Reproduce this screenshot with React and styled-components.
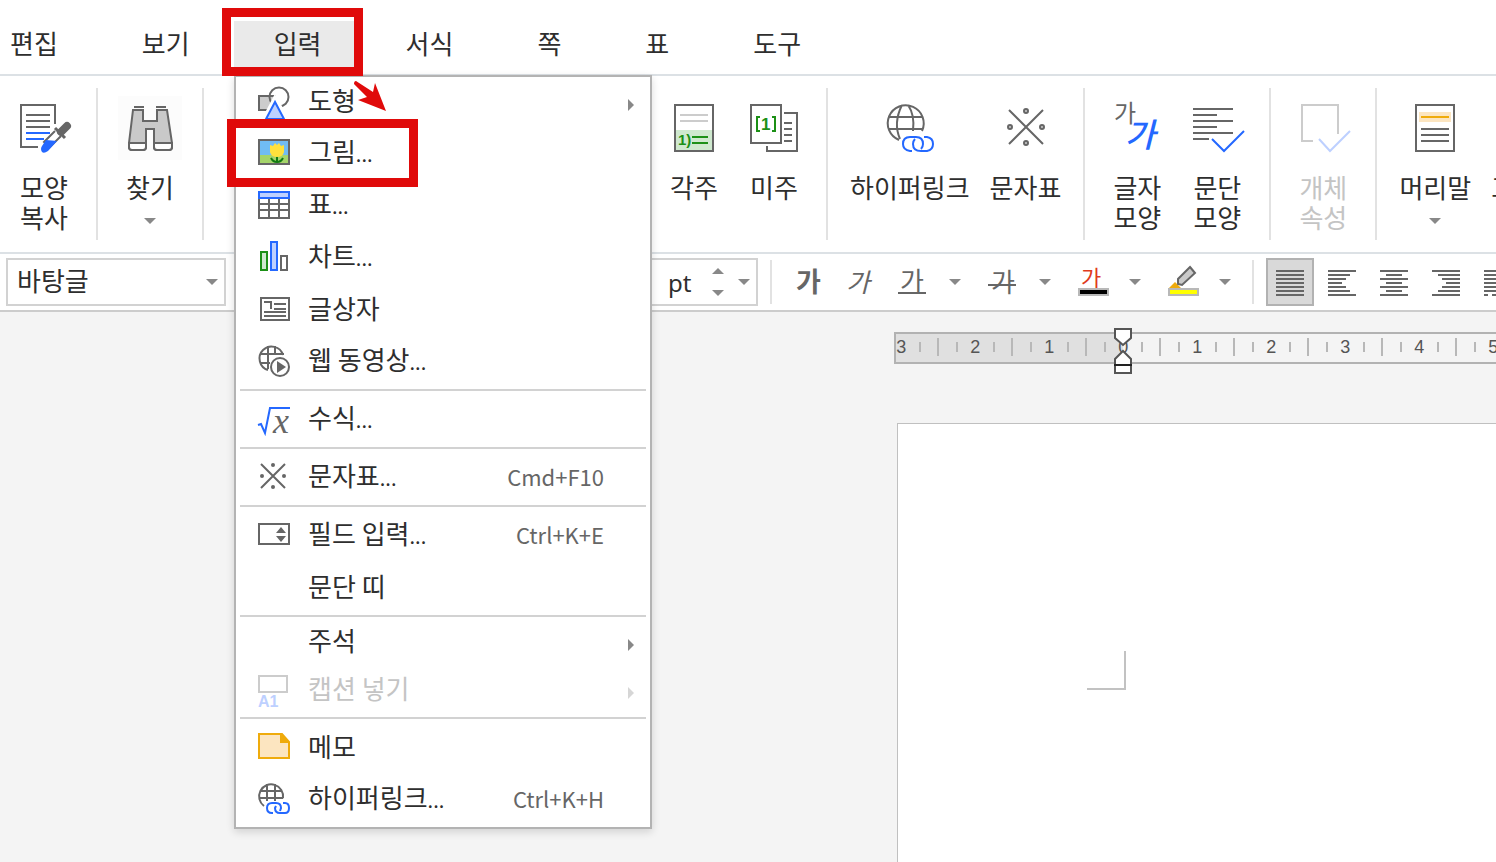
import React from 'react';
import styled, {createGlobalStyle, css} from 'styled-components';

const GlobalStyle = createGlobalStyle`
    *, *::before, *::after {
        box-sizing: border-box;
    }
    body {
        margin: 0;
        overflow: hidden;
        color: #2e2e2e;
        background: #f4f4f4;
        font-family: 'Noto Sans CJK KR', 'Noto Sans', sans-serif;
    }
    button, input, select {
        font: inherit;
        color: inherit;
    }
    svg {
        display: block;
        flex: none;
        overflow: visible;
    }
`;

const gray = '#666';
const blue = '#2468ff';
const green = '#1c9016';

const plainButton = css`
    margin: 0;
    padding: 0;
    border: 0;
    background: none;
`;

const Page = styled.div`
    position: relative;
    display: flex;
    flex-direction: column;
    height: 100vh;
    overflow: hidden;
`;

/* menu bar */

const MenuBar = styled.nav`
    display: flex;
    flex: none;
    height: 76px;
    padding-top: 20px;
    margin-left: -32px;
    background: #fff;
    border-bottom: 2px solid #dce1e5;
`;

const MenuBarItem = styled.button`
    ${plainButton}
    flex: none;
    height: 50px;
    padding: 0 40px 4px;
    font-size: 26px;
    line-height: 44px;
    border: solid #fff;
    border-width: 1px 2px;
    background: ${props => props.$open ? '#eaeaea' : 'none'};
`;

/* tool bar */

const ToolBar = styled.div`
    display: flex;
    flex: none;
    height: 178px;
    padding: 12px 0;
    background: #fff;
    border-bottom: 2px solid #dce1e5;
`;

const ToolGroup = styled.div`
    display: flex;
    flex: none;
    justify-content: flex-end;
    padding: 0 12px;
    min-width: ${props => props.$wide ? '624px' : '0'};
    border-right: 2px solid #e2e2e2;
    &:first-child {
        padding-left: 4px;
    }
    &:last-child {
        border-right: 0;
    }
`;

const ToolButton = styled.button`
    ${plainButton}
    display: flex;
    flex: none;
    flex-direction: column;
    align-items: center;
    min-width: 80px;
    padding: 8px 10px 0;
    font-size: 26px;
    line-height: 30px;
    white-space: pre-line;
    &:disabled {
        color: #c4c4c4;
    }
`;

const ToolIcon = styled.span`
    padding: 8px;
    margin: 0 -8px 12px;
    background: ${props => props.$tile ? '#fcfcfc' : 'none'};
`;

const ToolArrow = styled.span`
    display: flex;
    align-items: center;
    height: 40px;
`;

/* format bar */

const FormatBar = styled.div`
    display: flex;
    flex: none;
    align-items: center;
    gap: 4px;
    height: 58px;
    padding-left: 6px;
    background: #fff;
    border-bottom: 2px solid #ccc;
`;

const Field = styled.div`
    position: relative;
    display: flex;
    flex: none;
    align-items: center;
    width: 220px;
    height: 48px;
    font-size: 26px;
    background: #fff;
    border: 2px solid #d2d2d2;
`;

const FieldArrow = styled.span`
    position: absolute;
    right: 6px;
    pointer-events: none;
`;

const StyleSelect = styled.select`
    appearance: none;
    width: 100%;
    height: 100%;
    padding: 0 36px 4px 9px;
    border: 0;
    background: none;
    line-height: 40px;
`;

const SizeField = styled(Field)`
    margin: 0 4px 0 308px;
`;

const SizeInput = styled.input`
    width: 128px;
    padding: 0 8px;
    border: 0;
    background: none;
`;

const Unit = styled.label`
    width: 44px;
    font-family: 'Noto Sans', sans-serif;
    font-size: 24px;
`;

const Stepper = styled.span`
    display: flex;
    flex-direction: column;
    gap: 16px;
`;

const Divider = styled.span`
    flex: none;
    width: 2px;
    height: 44px;
    margin: 0 8px 0 4px;
    background: #e2e2e2;
`;

const FormatButton = styled.button`
    ${plainButton}
    flex: none;
    width: 48px;
    height: 48px;
    background: ${props => props.$active ? '#d9d9d9' : 'none'};
    box-shadow: ${props => props.$active ? 'inset 0 0 0 2px #b2b2b2' : 'none'};
`;

const Split = styled.span`
    display: flex;
    flex: none;
`;

const SplitArrow = styled.button`
    ${plainButton}
    display: flex;
    align-items: center;
    justify-content: center;
    width: 38px;
    height: 48px;
`;

/* work area */

const WorkArea = styled.main`
    display: flex;
    flex: 1;
    flex-direction: column;
    padding: 20px 0 0 894px;
`;

const RulerWrap = styled.div`
    position: relative;
    flex: none;
`;

const Ruler = styled.div`
    height: 32px;
    overflow: hidden;
    border: 2px solid #b2b2b2;
    border-right: 0;
    background: linear-gradient(to right, #e0e0e0 227px, #f4f4f4 227px);
`;

const RulerScale = styled.div`
    display: flex;
    margin-left: -41px;
`;

const RulerCell = styled.div`
    display: grid;
    flex: none;
    grid-template-columns: repeat(4, 1fr);
    align-items: center;
    justify-items: center;
    width: 74px;
    height: 26px;
    color: #555;
    font-family: 'Liberation Sans', sans-serif;
    font-size: 18px;
    line-height: 26px;
`;

const Tick = styled.span`
    width: 2px;
    height: ${props => props.$half ? '18px' : '10px'};
    background: #b8b8b8;
`;

const Indent = styled.svg`
    position: absolute;
    top: -4px;
    left: 220px;
`;

const Sheet = styled.section`
    flex: 1;
    margin: 59px 0 0 3px;
    padding: 227px 0 0 189px;
    background: #fff;
    border: solid #c0c0c0;
    border-width: 1px 0 0 1px;
`;

const MarginCorner = styled.div`
    width: 39px;
    height: 39px;
    border: solid #c2c2c2;
    border-width: 0 2px 2px 0;
`;

/* drop-down menu */

const Menu = styled.div`
    position: absolute;
    top: 75px;
    left: 234px;
    width: 418px;
    padding: 1px 0 3px;
    background: #fff;
    border: 2px solid #b3b3b3;
    box-shadow: 0 3px 8px rgba(0, 0, 0, 0.14);
`;

const MenuLabel = styled.span`
    flex: 1;
    white-space: nowrap;
`;

const MenuRow = styled.button`
    ${plainButton}
    display: flex;
    align-items: center;
    gap: 18px;
    width: 100%;
    height: ${props => props.$sub ? '48px' : '52px'};
    padding: 0 16px 0 22px;
    font-size: 26px;
    line-height: 44px;
    text-align: left;
    ${MenuLabel} {
        padding-bottom: ${props => props.$sub ? '4px' : '0'};
    }
    &:disabled {
        color: #c4c4c4;
    }
`;

const MenuIcon = styled.span`
    flex: none;
    width: 32px;
    height: 32px;
`;

const Dots = styled.span`
    font-size: 20px;
`;

const Shortcut = styled.span`
    margin-right: 30px;
    color: #666;
    font-size: 22px;
`;

const MenuLine = styled.hr`
    height: 2px;
    margin: 3px 4px 1px;
    border: 0;
    background: #d2d2d2;
`;

/* red marks drawn over the window */

const Mark = styled.div`
    position: absolute;
    height: 68px;
    border: 9px solid #e00a0a;
    pointer-events: none;
`;

const TabMark = styled(Mark)`
    top: 8px;
    left: 222px;
    width: 141px;
`;

const RowMark = styled(Mark)`
    top: 119px;
    left: 227px;
    width: 191px;
`;

const Pointer = styled.svg`
    position: absolute;
    top: 80px;
    left: 352px;
`;

const Arrow = ({up}) => (
    <svg width="12" height="6" viewBox="0 0 12 6">
        <path d={up ? 'M0 6 6 0 12 6z' : 'M0 0h12L6 6z'} fill="#888"/>
    </svg>
);

const SubArrow = ({disabled}) => (
    <svg width="6" height="12" viewBox="0 0 6 12">
        <path d="M0 3v12l6-6z" fill={disabled ? '#d6d6d6' : '#888'}/>
    </svg>
);

const Icon = ({size = 48, children, ...props}) => (
    <svg width={size} height={size} viewBox={`0 0 ${size} ${size}`} fill="none" stroke={gray} strokeWidth="2" aria-hidden="true" {...props}>
        {children}
    </svg>
);

const glyph = {stroke: 'none', fontFamily: "'Noto Sans CJK KR', sans-serif"};
const latin = {stroke: 'none', fontFamily: "'Liberation Sans', sans-serif"};

const icons = {
    copyShape: (
        <Icon>
            <path d="M18 43H1V1h34v19"/>
            <path d="M6 11h24M6 17h24M6 23h24"/>
            <path d="M6 29h24M6 35h18" stroke={blue}/>
            <path d="m35 27-11 11 6 5 11-11" fill="#fff"/>
            <path d="m26 36 11 1-9 10q-4 3-6 1-2-3 0-6z" fill={blue} stroke="none"/>
            <path d="m35 24 10 10" strokeWidth="3"/>
            <path d="m41 28 6-6" strokeWidth="8" strokeLinecap="round"/>
        </Icon>
    ),
    find: (
        <Icon>
            <path d="M8 3h10M30 3h10"/>
            <path d="M7 6h10v11h14V6h10l5 33v4q0 3-3 3H31q-3 0-3-3V25h-8v18q0 3-3 3H6q-3 0-3-3v-4z" fill="#c9c9c9"/>
            <path d="M3 39h17v4q0 3-3 3H6q-3 0-3-3zM28 39h18v4q0 3-3 3H31q-3 0-3-3z" fill="#fff"/>
        </Icon>
    ),
    footnote: (
        <Icon>
            <path d="M6 26h36v20H6z" fill="#cfe9cf" stroke="none"/>
            <path d="M5 1h38v46H5z"/>
            <path d="M10 11h28M10 17h28" stroke="#ccc"/>
            <path d="M22 33h16M22 39h16" stroke={green}/>
            <text x="8" y="41" fontSize="15" fontWeight="700" fill={green} {...latin}>1)</text>
        </Icon>
    ),
    endnote: (
        <Icon>
            <path d="M1 1h30v38H1z"/>
            <path d="M34 9h13v38H17v-5M34 19h8M34 25h8M34 31h8M34 37h8"/>
            <path d="M10 13H7v14h3M22 13h3v14h-3" stroke={green}/>
            <text x="11" y="26" fontSize="17" fontWeight="700" fill={green} {...latin}>1</text>
        </Icon>
    ),
    hyperlink: (
        <Icon>
            <path d="M13 36A18 18 0 1 1 36 27M2 13h34M2 25h34M14 35Q7 19 16 1M22 1q7 10 5 26"/>
            <g stroke={blue}>
                <path d="M26 47h-2q-7-1-7-7 0-7 7-7h6q7 0 7 7 0 3-2 5"/>
                <path d="M38 33h3q6 1 6 7t-6 7h-6q-8 0-8-7 0-3 2-5"/>
            </g>
        </Icon>
    ),
    symbols: (
        <Icon>
            <path d="m8 6 34 34M42 6 8 40"/>
            <g fill="#ccc">
                <circle cx="25" cy="7" r="2"/>
                <circle cx="25" cy="39" r="2"/>
                <circle cx="9" cy="23" r="2"/>
                <circle cx="41" cy="23" r="2"/>
            </g>
        </Icon>
    ),
    charShape: (
        <Icon>
            <text x="1" y="18" fontSize="24" fill={gray} {...glyph}>가</text>
            <text x="12" y="43" fontSize="33" fontWeight="500" fontStyle="italic" fill={blue} {...glyph}>가</text>
        </Icon>
    ),
    paraShape: (
        <Icon>
            <path d="M0 5h40M0 11h24M0 17h40M0 23h24M0 29h40M0 35h16"/>
            <path d="m19 35 12 12 20-20" stroke={blue}/>
        </Icon>
    ),
    objectProps: (
        <Icon>
            <path d="M14 37H3V1h36v29" stroke="#ccc"/>
            <path d="m20 35 11 12 20-20" stroke="#bdd0ff"/>
        </Icon>
    ),
    header: (
        <Icon>
            <path d="M8 8h32v10H8z" fill="#fce5c0" stroke="none"/>
            <path d="M5 1h38v46H5zM10 25h28M10 31h28M10 37h28"/>
            <path d="M10 13h28" stroke="#efab0c"/>
        </Icon>
    ),
    bold: (
        <Icon><text x="12" y="34" fontSize="27" fontWeight="700" fill={gray} {...glyph}>가</text></Icon>
    ),
    italic: (
        <Icon><text x="10" y="34" fontSize="26" fontStyle="italic" fill={gray} {...glyph}>가</text></Icon>
    ),
    underline: (
        <Icon>
            <text x="12" y="33" fontSize="26" fill={gray} {...glyph}>가</text>
            <path d="M10 35h28"/>
        </Icon>
    ),
    strike: (
        <Icon>
            <text x="13" y="34" fontSize="26" fill={gray} {...glyph}>가</text>
            <path d="M10 27h28"/>
        </Icon>
    ),
    textColor: (
        <Icon>
            <text x="13" y="28" fontSize="22" fill="#e03a1c" {...glyph}>가</text>
            <path d="M11 31h29v6H11z" fill="#000" stroke="#b8b8b8"/>
        </Icon>
    ),
    highlight: (
        <Icon>
            <path d="m11 30 6-6 6 6z" fill="#efab0c" stroke="none"/>
            <path d="m32 9 5 6-13 12-4-1v-5z" fill="#c9c9c9"/>
            <path d="M11 31h29v6H11z" fill="#ff0" stroke="#b8b8b8"/>
        </Icon>
    ),
    justify: (
        <Icon><path d="M10 13h28M10 17h28M10 21h28M10 25h28M10 29h28M10 33h28M10 37h28"/></Icon>
    ),
    left: (
        <Icon><path d="M10 13h28M10 17h22M10 21h18M10 25h14M10 29h18M10 33h22M10 37h28"/></Icon>
    ),
    center: (
        <Icon><path d="M10 13h28M16 17h16M10 21h28M16 25h16M10 29h28M16 33h16M10 37h28"/></Icon>
    ),
    right: (
        <Icon><path d="M10 13h28M16 17h22M20 21h18M24 25h14M20 29h18M16 33h22M10 37h28"/></Icon>
    ),
    distribute: (
        <Icon><path d="M10 13h28M10 17h28M10 21h28M10 25h28M10 29h28M10 33h28M10 37h4M18 37h4M26 37h4M34 37h4"/></Icon>
    ),
    shapes: (
        <Icon size={32}>
            <path d="M1 10h16v14H1z" fill="#ccc"/>
            <circle cx="21" cy="11" r="9.5"/>
            <path d="M17 12 6 33h23z" fill="#fff" stroke="#fff" strokeWidth="4"/>
            <path d="M17 16 8 33h18z" fill="#bdd0ff" stroke={blue}/>
        </Icon>
    ),
    picture: (
        <Icon size={32}>
            <path d="M1 4h30v24H1z" fill="#70bcf4"/>
            <path d="M2 19h28v8H2z" fill="#a5d46a" stroke="none"/>
            <path d="M19 20v7M13 22q2 4 6 4 4 0 6-4" stroke="#127a12"/>
            <path d="m12 9 3 1 2-3 2 2 2-2 2 3 3-1v7q-1 5-7 5t-7-5z" fill="#ffe13c" stroke="none"/>
        </Icon>
    ),
    table: (
        <Icon size={32}>
            <path d="M1 10v20h30V10M1 16h30M1 22h30M11 10v20M21 10v20"/>
            <path d="M1 4h30v6H1z" fill="#bdd0ff" stroke={blue}/>
        </Icon>
    ),
    chart: (
        <Icon size={32}>
            <path d="M3 12h6v18H3z" fill="#cfe9cf" stroke={green}/>
            <path d="M13 2h6v28h-6z" fill="#bdd0ff" stroke={blue}/>
            <path d="M23 16h6v14h-6z"/>
        </Icon>
    ),
    textBox: (
        <Icon size={32}>
            <path d="M3 6h28v22H3zM6 10h7v7M16 12h12M16 17h12M6 20h22M6 24h22"/>
        </Icon>
    ),
    webVideo: (
        <Icon size={32}>
            <path d="M10 26A12 12 0 1 1 25 11M2 10h24M2 19h10M10 2v23M17 2v9"/>
            <circle cx="22" cy="23" r="9"/>
            <path d="m19 17 9 6-9 6z" fill={gray} stroke="none"/>
        </Icon>
    ),
    equation: (
        <Icon size={32}>
            <path d="m0 23 3-1 4 9 5-25h20" stroke={blue}/>
            <text x="15" y="31" fontSize="36" fontStyle="italic" fill={gray} stroke="none" fontFamily="'Liberation Serif', serif">x</text>
        </Icon>
    ),
    smallSymbols: (
        <Icon size={32}>
            <path d="m3 4 24 24M27 4 3 28"/>
            <g fill={gray} stroke="none">
                <circle cx="15" cy="5" r="2"/>
                <circle cx="15" cy="27" r="2"/>
                <circle cx="4" cy="16" r="2"/>
                <circle cx="26" cy="16" r="2"/>
            </g>
        </Icon>
    ),
    field: (
        <Icon size={32}>
            <path d="M1 6h30v20H1z"/>
            <path d="m18 15 5-6 5 6zM18 18h10l-5 6z" fill={gray} stroke="none"/>
        </Icon>
    ),
    caption: (
        <Icon size={32}>
            <path d="M1 2h28v16H1z" stroke="#ccc"/>
            <text x="0" y="33" fontSize="16" fontWeight="700" fill="#bdd0ff" {...latin}>A1</text>
        </Icon>
    ),
    memo: (
        <Icon size={32}>
            <path d="M1 4h23l7 8v16H1z" fill="#fce5c0" stroke="#efab0c"/>
            <path d="M22 4h2l7 8v1h-9z" fill="#efab0c" stroke="none"/>
        </Icon>
    ),
    smallLink: (
        <Icon size={32}>
            <path d="M6 24A12 12 0 1 1 25 16M2 9h22M1 16h24M9 2v17M17 2v17"/>
            <path d="M15 31h-1q-5 0-5-5t5-5h4q5 0 5 5l-1 3M25 21h2q4 0 4 5t-4 5h-5q-5 0-5-5l1-2" stroke={blue}/>
        </Icon>
    ),
};

const menus = ['편집', '보기', '입력', '서식', '쪽', '표', '도구'];

const toolGroups = [
    {tools: [{icon: 'copyShape', label: '모양\n복사'}]},
    {tools: [{icon: 'find', label: '찾기', arrow: true, tile: true}]},
    {wide: true, tools: [{icon: 'footnote', label: '각주'}, {icon: 'endnote', label: '미주'}]},
    {tools: [{icon: 'hyperlink', label: '하이퍼링크'}, {icon: 'symbols', label: '문자표'}]},
    {tools: [{icon: 'charShape', label: '글자\n모양'}, {icon: 'paraShape', label: '문단\n모양'}]},
    {tools: [{icon: 'objectProps', label: '개체\n속성', disabled: true}]},
    {tools: [{icon: 'header', label: '머리말', arrow: true}, {icon: 'header', label: '꼬리말', arrow: true}]},
];

const menuRows = [
    {icon: 'shapes', label: '도형', sub: true},
    {icon: 'picture', label: '그림', dots: true},
    {icon: 'table', label: '표', dots: true},
    {icon: 'chart', label: '차트', dots: true},
    {icon: 'textBox', label: '글상자'},
    {icon: 'webVideo', label: '웹 동영상', dots: true},
    null,
    {icon: 'equation', label: '수식', dots: true},
    null,
    {icon: 'smallSymbols', label: '문자표', dots: true, shortcut: 'Cmd+F10'},
    null,
    {icon: 'field', label: '필드 입력', dots: true, shortcut: 'Ctrl+K+E'},
    {label: '문단 띠'},
    null,
    {label: '주석', sub: true},
    {icon: 'caption', label: '캡션 넣기', sub: true, disabled: true},
    null,
    {icon: 'memo', label: '메모'},
    {icon: 'smallLink', label: '하이퍼링크', dots: true, shortcut: 'Ctrl+K+H'},
];

const splitTools = [
    {icon: 'underline', label: '밑줄'},
    {icon: 'strike', label: '취소선'},
    {icon: 'textColor', label: '글자 색'},
    {icon: 'highlight', label: '형광펜'},
];

const alignTools = [
    {icon: 'justify', label: '양쪽 정렬'},
    {icon: 'left', label: '왼쪽 정렬'},
    {icon: 'center', label: '가운데 정렬'},
    {icon: 'right', label: '오른쪽 정렬'},
    {icon: 'distribute', label: '배분 정렬'},
];

// centimetres left of the text edge first, then the ones on the text itself
const rulerMarks = [3, 2, 1, 0, 1, 2, 3, 4, 5];

const App = () => (
    <Page>
        <GlobalStyle/>
        <MenuBar>
            {menus.map(name => (
                <MenuBarItem key={name} $open={name === '입력'}>{name}</MenuBarItem>
            ))}
        </MenuBar>
        <ToolBar>
            {toolGroups.map((group, i) => (
                <ToolGroup key={i} $wide={group.wide}>
                    {group.tools.map(tool => (
                        <ToolButton key={tool.label} disabled={tool.disabled}>
                            <ToolIcon $tile={tool.tile}>{icons[tool.icon]}</ToolIcon>
                            {tool.label}
                            {tool.arrow && <ToolArrow><Arrow/></ToolArrow>}
                        </ToolButton>
                    ))}
                </ToolGroup>
            ))}
        </ToolBar>
        <FormatBar>
            <Field>
                <StyleSelect aria-label="스타일" defaultValue="바탕글">
                    <option>바탕글</option>
                    <option>본문</option>
                </StyleSelect>
                <FieldArrow><Arrow/></FieldArrow>
            </Field>
            <SizeField>
                <SizeInput id="size" defaultValue="10.0"/>
                <Unit htmlFor="size">pt</Unit>
                <Stepper><Arrow up/><Arrow/></Stepper>
                <FieldArrow><Arrow/></FieldArrow>
            </SizeField>
            <Divider/>
            <FormatButton aria-label="진하게">{icons.bold}</FormatButton>
            <FormatButton aria-label="기울임">{icons.italic}</FormatButton>
            {splitTools.map(tool => (
                <Split key={tool.icon}>
                    <FormatButton aria-label={tool.label}>{icons[tool.icon]}</FormatButton>
                    <SplitArrow aria-label={`${tool.label} 목록`}><Arrow/></SplitArrow>
                </Split>
            ))}
            <Divider/>
            {alignTools.map(tool => (
                <FormatButton key={tool.icon} aria-label={tool.label} $active={tool.icon === 'justify'}>
                    {icons[tool.icon]}
                </FormatButton>
            ))}
        </FormatBar>
        <WorkArea>
            <RulerWrap>
                <Ruler>
                    <RulerScale>
                        {rulerMarks.map((mark, i) => (
                            <RulerCell key={i}>
                                <Tick $half/>
                                <Tick/>
                                <span>{mark}</span>
                                <Tick/>
                            </RulerCell>
                        ))}
                    </RulerScale>
                </Ruler>
                <Indent width="18" height="46" viewBox="0 0 18 46" fill="#fff" stroke="#555" strokeWidth="2">
                    <path d="M1 1h16v9l-8 7-8-7z"/>
                    <path d="M1 45V31l8-8 8 8v14z"/>
                    <path d="M0 37h18" stroke="#222"/>
                </Indent>
            </RulerWrap>
            <Sheet>
                <MarginCorner/>
            </Sheet>
        </WorkArea>
        <Menu>
            {menuRows.map((row, i) => row ? (
                <MenuRow key={i} $sub={row.sub} disabled={row.disabled}>
                    <MenuIcon>{icons[row.icon]}</MenuIcon>
                    <MenuLabel>{row.label}{row.dots && <Dots>...</Dots>}</MenuLabel>
                    {row.shortcut && <Shortcut>{row.shortcut}</Shortcut>}
                    {row.sub && <SubArrow disabled={row.disabled}/>}
                </MenuRow>
            ) : <MenuLine key={i}/>)}
        </Menu>
        <TabMark/>
        <RowMark/>
        <Pointer width="34" height="32" viewBox="0 0 34 32">
            <path d="m4 1 17 11 2-9 11 28-28-11 9-3L2 4q0-3 2-3z" fill="#e00a0a"/>
        </Pointer>
    </Page>
);

export default App;
